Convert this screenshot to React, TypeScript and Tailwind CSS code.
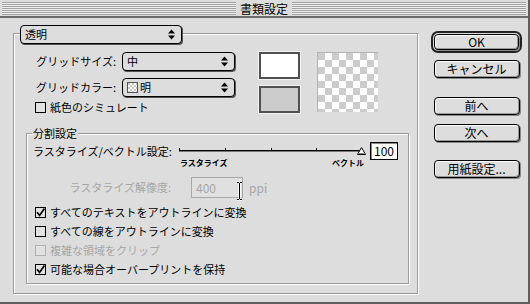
import type { ReactNode } from 'react'

const etched = 'border border-[#9a9a9a] shadow-[1px_1px_0_#ffffff,inset_1px_1px_0_#ffffff]'

function Arrows() {
  return (
    <svg width="7" height="11" viewBox="0 0 7 11">
      <path d="M0 4.5L3.5 0.5L7 4.5Z M0 6.5L3.5 10.5L7 6.5Z" fill="#000" />
    </svg>
  )
}

function Popup({ w, children }: { w: string; children: ReactNode }) {
  return (
    <div className={`flex items-center h-[19px] ${w} rounded-[4px] border border-black bg-[#dddddd] shadow-[1px_1px_0_#555555] pl-[4px] pr-[6px]`}>
      <div className="flex-1 flex items-center gap-[2px] leading-[17px]">{children}</div>
      <Arrows />
    </div>
  )
}

function CheckBox({ checked, disabled, children }: { checked?: boolean; disabled?: boolean; children: ReactNode }) {
  return (
    <div className={`flex items-center gap-[4px] h-[19px] ${disabled ? 'text-[#a6a6a6]' : 'text-black'}`}>
      <div className={`w-[11px] h-[11px] border ${disabled ? 'border-[#b0b0b0]' : 'border-black'} bg-[#e2e2e2] flex items-center justify-center`}>
        {checked && (
          <svg width="9" height="9" viewBox="0 0 9 9">
            <path d="M1 4.2L3.6 7.4L8.4 0.6" stroke="#000" strokeWidth="1.7" fill="none" />
          </svg>
        )}
      </div>
      <span className="leading-[19px]">{children}</span>
    </div>
  )
}

function Button({ w, h, children }: { w: string; h: string; children: ReactNode }) {
  return (
    <div className={`${w} ${h} flex items-center justify-center rounded-[4px] border border-black bg-[#dddddd] shadow-[inset_1px_1px_0_#ffffff,inset_-1px_-1px_0_#9a9a9a,1px_1px_0_#888888] text-[12px] leading-none`}>
      {children}
    </div>
  )
}

function Slider() {
  return (
    <svg width="190" height="14" viewBox="0 0 190 14">
      <line x1="3" y1="8.5" x2="186" y2="8.5" stroke="#000" strokeWidth="1" />
      <line x1="3" y1="9.5" x2="186" y2="9.5" stroke="#777" strokeWidth="1" />
      {[3.5, 49.5, 95.5, 140.5].map(x => (
        <line key={x} x1={x} y1="6" x2={x} y2="8" stroke="#000" strokeWidth="1" />
      ))}
      <path d="M181.5 12.5L185.5 5.5L189.5 12.5Z" fill="#ffffff" stroke="#000" strokeWidth="1" />
      <line x1="182" y1="11.5" x2="189" y2="11.5" stroke="#888" strokeWidth="1" />
    </svg>
  )
}

export default function App() {
  return (
    <div className="w-[530px] h-[304px] bg-[#dddddd] border-r-2 border-b-2 border-[#5e5e5e] flex flex-col text-[11px] text-black font-['Noto_Sans_CJK_JP',sans-serif] leading-none overflow-hidden">
      {/* title bar */}
      <div className="h-[18px] flex items-start pt-[2px] px-[2px] border-b-2 border-[#6a6a6a]">
        <div className="flex-1 h-[13px] bg-[repeating-linear-gradient(to_bottom,#a2a2a2_0px,#a2a2a2_1px,#efefef_1px,#efefef_2px)]" />
        <div className="px-[4px] text-[12px] leading-[13px]">書類設定</div>
        <div className="flex-1 h-[13px] bg-[repeating-linear-gradient(to_bottom,#a2a2a2_0px,#a2a2a2_1px,#efefef_1px,#efefef_2px)]" />
      </div>

      <div className="flex">
        {/* transparency group */}
        <div className={`relative ml-[13px] mt-[15px] w-[405px] h-[261px] ${etched} pt-[17px]`}>
          <div className="absolute left-[6px] top-[-9px]">
            <Popup w="w-[162px]">透明</Popup>
          </div>

          <div className="flex items-start">
            <div className="flex flex-col w-[221px]">
              <div className="flex items-center h-[20px]">
                <span className="w-[103px] text-right pr-[1px]">グリッドサイズ:</span>
                <div className="ml-[5px]">
                  <Popup w="w-[113px]">中</Popup>
                </div>
              </div>
              <div className="flex items-center h-[20px] mt-[6px]">
                <span className="w-[103px] text-right pr-[1px]">グリッドカラー:</span>
                <div className="ml-[5px]">
                  <Popup w="w-[113px]">
                    <span className="w-[11px] h-[11px] border border-[#555] bg-[repeating-conic-gradient(#ffffff_0_25%,#c8c8c8_0_50%)] bg-[length:4px_4px]" />
                    <span>明</span>
                  </Popup>
                </div>
              </div>
              <div className="pl-[21px] mt-[1px]">
                <CheckBox>紙色のシミュレート</CheckBox>
              </div>
            </div>

            <div className="flex flex-col gap-[7px] ml-[24px] mt-[1px]">
              <div className="w-[41px] h-[27px] bg-white border-2 border-[#505050] shadow-[0_0_0_1px_#f2f2f2]" />
              <div className="w-[41px] h-[27px] bg-[#cccccc] border-2 border-[#505050] shadow-[0_0_0_1px_#f2f2f2]" />
            </div>

            <div className="ml-[17px] mt-[1px] w-[61px] h-[60px] border-l border-t border-[#b4b4b4] bg-[repeating-conic-gradient(#ffffff_0_25%,#cccccc_0_50%)] bg-[length:14px_14px]" />
          </div>

          {/* split settings group */}
          <div className={`relative ml-[12px] mt-[16px] w-[383px] h-[151px] ${etched} pl-[6px] pt-[8px]`}>
            <span className="absolute left-[5px] top-[-8px] px-[1px] bg-[#dddddd] leading-[14px]">分割設定</span>

            <div className="flex items-start">
              <span className="w-[143px] leading-[18px]">ラスタライズ/ベクトル設定:</span>
              <div className="flex flex-col">
                <Slider />
                <div className="relative h-[12px] mt-[1px] text-[8px] font-bold leading-[12px]">
                  <span className="absolute left-[4px]">ラスタライズ</span>
                  <span className="absolute left-[156px]">ベクトル</span>
                </div>
              </div>
              <div className="ml-[4px] w-[28px] h-[18px] border border-black bg-white shadow-[inset_1px_1px_0_#888888] text-[12px] leading-[16px] pl-[3px]">100</div>
            </div>

            <div className="flex items-center mt-[8px] h-[21px] text-[#a6a6a6]">
              <span className="w-[138px] text-right">ラスタライズ解像度:</span>
              <div className="relative ml-[20px] w-[52px] h-[21px] border border-[#a8a8a8] bg-[#e0e0e0] text-[12px] leading-[19px] pl-[4px]">
                400
                <svg className="absolute left-[44px] top-[3px]" width="7" height="20" viewBox="0 0 7 20">
                  <path d="M1 1.5H3M4 1.5H6M3.5 2V18M1 18.5H3M4 18.5H6" stroke="#ffffff" strokeWidth="2.5" fill="none" />
                  <path d="M1 1.5H3M4 1.5H6M3.5 2V18M1 18.5H3M4 18.5H6" stroke="#000" strokeWidth="1" fill="none" />
                </svg>
              </div>
              <span className="ml-[6px] text-[12px]">ppi</span>
            </div>

            <div className="flex flex-col mt-[5px] ml-[2px]">
              <CheckBox checked>すべてのテキストをアウトラインに変換</CheckBox>
              <CheckBox>すべての線をアウトラインに変換</CheckBox>
              <CheckBox disabled>複雑な領域をクリップ</CheckBox>
              <CheckBox checked>可能な場合オーバープリントを保持</CheckBox>
            </div>
          </div>
        </div>

        {/* buttons */}
        <div className="ml-[13px] mt-[13px] w-[91px] flex flex-col items-center">
          <div className="w-[91px] h-[22px] border-2 border-[#222222] rounded-[7px] p-[1px]">
            <Button w="w-full" h="h-full">OK</Button>
          </div>
          <div className="mt-[7px]"><Button w="w-[86px]" h="h-[18px]">キャンセル</Button></div>
          <div className="mt-[19px]"><Button w="w-[86px]" h="h-[18px]">前へ</Button></div>
          <div className="mt-[9px]"><Button w="w-[86px]" h="h-[18px]">次へ</Button></div>
          <div className="mt-[18px]"><Button w="w-[86px]" h="h-[18px]">用紙設定...</Button></div>
        </div>
      </div>
    </div>
  )
}
